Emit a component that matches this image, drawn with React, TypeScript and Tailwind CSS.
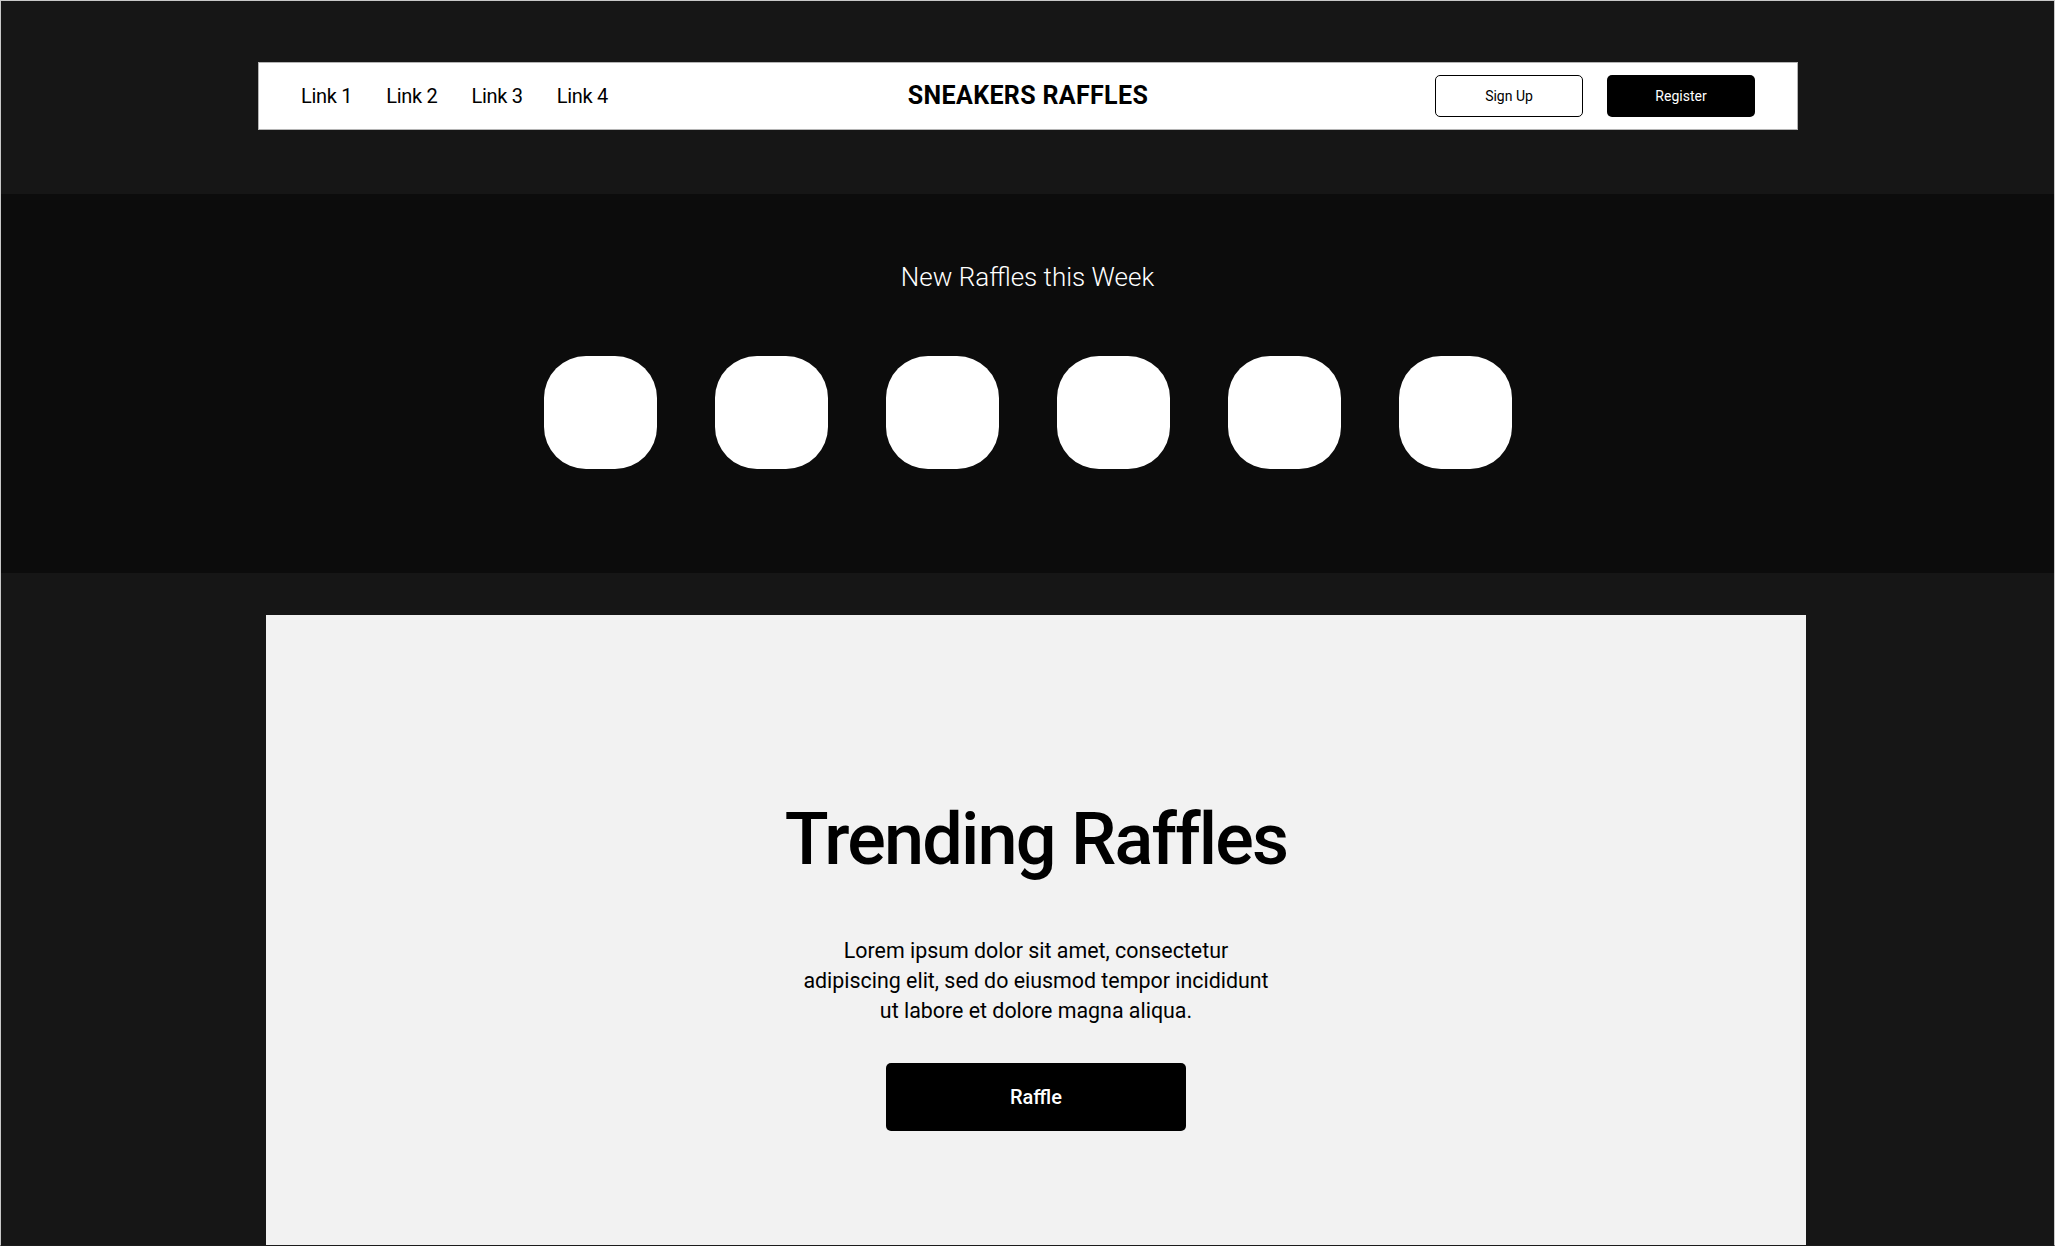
import React from 'react';

const links = ['Link 1', 'Link 2', 'Link 3', 'Link 4'];

function NavBar() {
  return (
    <nav className="ml-[257px] mt-[61px] flex h-[68px] w-[1540px] items-center justify-between border border-[#b4b4b4] bg-white px-[42px]">
      <div className="flex w-[400px] items-center gap-[34px]">
        {links.map((l) => (
          <a key={l} className="text-[20px] leading-none tracking-[-0.3px] text-black">
            {l}
          </a>
        ))}
      </div>
      <div className="text-[25px] font-bold tracking-[0.35px] text-black">SNEAKERS RAFFLES</div>
      <div className="flex w-[400px] items-center justify-end gap-[24px]">
        <button className="h-[42px] w-[148px] rounded-[5px] border border-black bg-white text-[14px] text-black">
          Sign Up
        </button>
        <button className="h-[42px] w-[148px] rounded-[5px] bg-black text-[14px] text-white">
          Register
        </button>
      </div>
    </nav>
  );
}

function NewRaffles() {
  return (
    <section className="mt-[64px] flex h-[379px] w-full flex-col items-center bg-[#0c0c0c] pt-[66px]">
      <h2 className="text-[26px] font-light leading-[34px] text-white">New Raffles this Week</h2>
      <div className="mt-[62px] flex gap-[58px]">
        {[0, 1, 2, 3, 4, 5].map((i) => (
          <div key={i} className="h-[113px] w-[113px] rounded-[42px] bg-white" />
        ))}
      </div>
    </section>
  );
}

function Trending() {
  return (
    <section className="ml-[265px] mt-[42px] flex w-[1540px] flex-1 flex-col items-center bg-[#f2f2f2] pt-[189px]">
      <h1 className="text-[72px] font-medium leading-none tracking-[-1.8px] text-black">Trending Raffles</h1>
      <p className="mt-[60px] text-center text-[21.4px] leading-[30px] text-black">
        Lorem ipsum dolor sit amet, consectetur
        <br />
        adipiscing elit, sed do eiusmod tempor incididunt
        <br />
        ut labore et dolore magna aliqua.
      </p>
      <button className="mt-[37px] h-[68px] w-[300px] rounded-[5px] bg-black text-[20px] font-medium text-white">
        Raffle
      </button>
    </section>
  );
}

export default function App() {
  return (
    <div
      className="flex h-[1246px] w-full flex-col overflow-hidden border-x border-t border-x-[#c8c8c8] border-t-[#c8c8c8] border-b border-b-[#1c1c1c] bg-[#161616]"
      style={{ fontFamily: 'Roboto, "Noto Sans", sans-serif' }}
    >
      <NavBar />
      <NewRaffles />
      <Trending />
    </div>
  );
}
